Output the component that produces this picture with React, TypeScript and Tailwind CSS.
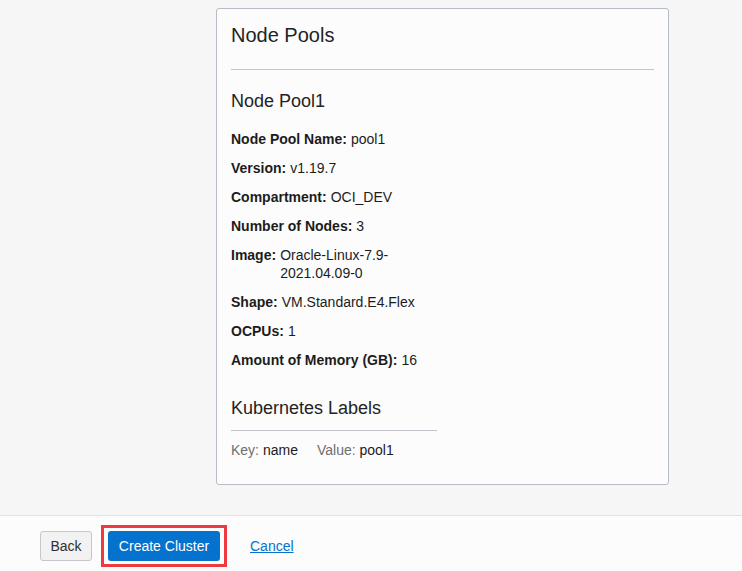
const FONT = { fontFamily: '"Liberation Sans", Arial, sans-serif' };

type Detail = { label: string; value: string };

const DETAILS: Detail[] = [
  { label: "Node Pool Name:", value: "pool1" },
  { label: "Version:", value: "v1.19.7" },
  { label: "Compartment:", value: "OCI_DEV" },
  { label: "Number of Nodes:", value: "3" },
  { label: "Image:", value: "Oracle-Linux-7.9-2021.04.09-0" },
  { label: "Shape:", value: "VM.Standard.E4.Flex" },
  { label: "OCPUs:", value: "1" },
  { label: "Amount of Memory (GB):", value: "16" },
];

function DetailRow({ label, value }: Detail) {
  return (
    <div className="flex gap-[4px] text-[14px] leading-[18px] text-[#1c1c1c]">
      <span className="shrink-0 font-bold">{label}</span>
      <span className="min-w-0">{value}</span>
    </div>
  );
}

export default function App() {
  return (
    <div className="flex h-[571px] w-[742px] flex-col overflow-hidden" style={FONT}>
      <main className="h-[515px] shrink-0 bg-[#f6f6f6] pl-[216px] pt-[8px]">
        <section className="h-[477px] w-[453px] rounded-[3px] border border-[#b6bdc6] bg-[#fcfcfc] px-[14px] pt-[14px]">
          <h2 className="text-[20px] leading-[24px] text-[#232323]">Node Pools</h2>
          <div className="mt-[22px] h-px bg-[#bfc4cb]" />

          <h3 className="mt-[20px] text-[18px] leading-[22px] text-[#232323]">Node Pool1</h3>

          <div className="mt-[18px] flex w-[206px] flex-col gap-[11px]">
            {DETAILS.map((d) => (
              <DetailRow key={d.label} label={d.label} value={d.value} />
            ))}
          </div>

          <div className="mt-[28px] w-[206px]">
            <h3 className="text-[18px] leading-[22px] text-[#232323]">Kubernetes Labels</h3>
            <div className="mt-[11px] h-px bg-[#bfc4cb]" />
            <div className="mt-[10px] flex gap-[19px] text-[14px] leading-[18px]">
              <span>
                <span className="text-[#6f6f6f]">Key: </span>
                <span className="text-[#1c1c1c]">name</span>
              </span>
              <span>
                <span className="text-[#6f6f6f]">Value: </span>
                <span className="text-[#1c1c1c]">pool1</span>
              </span>
            </div>
          </div>
        </section>
      </main>

      <footer className="flex h-[56px] shrink-0 items-start border-t border-[#e2e2e2] bg-[#fcfcfc] pl-[40px] pt-[9px]">
        <button
          type="button"
          className="mt-[6px] h-[30px] w-[52px] rounded-[3px] border border-[#c4c7cc] bg-[#f2f2f2] text-[14px] text-[#2e2e2e]"
        >
          Back
        </button>
        <div className="ml-[9px] border-[3px] border-[#ee3a3f] px-[4px] py-[3px]">
          <button
            type="button"
            className="h-[30px] w-[112px] rounded-[3px] bg-[#0572ce] text-[14px] text-white"
          >
            Create Cluster
          </button>
        </div>
        <a
          href="#"
          className="ml-[23px] mt-[6px] text-[14px] leading-[30px] text-[#0572ce] underline"
        >
          Cancel
        </a>
      </footer>
    </div>
  );
}
